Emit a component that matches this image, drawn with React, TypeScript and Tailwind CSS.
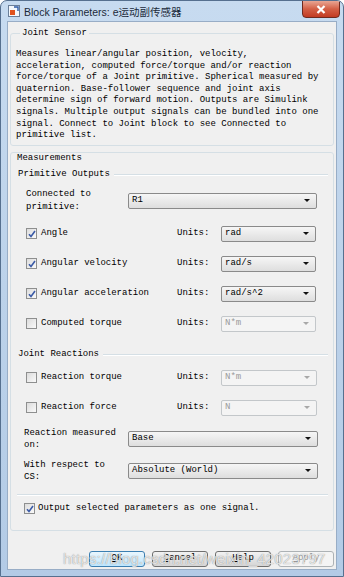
import React from 'react';

const mono = "font-['Liberation_Mono','DejaVu_Sans_Mono',monospace]";

const descLines = [
    'Measures linear/angular position, velocity,',
    'acceleration, computed force/torque and/or reaction',
    'force/torque of a Joint primitive. Spherical measured by',
    'quaternion. Base-follower sequence and joint axis',
    'determine sign of forward motion. Outputs are Simulink',
    'signals. Multiple output signals can be bundled into one',
    'signal. Connect to Joint block to see Connected to',
    'primitive list.',
];

const Combo = ({ value, width, disabled = false }: { value: string; width: string; disabled?: boolean }) => (
    <div
        className={`${width} h-[16px] flex items-center justify-between pl-[3px] pr-[6px] rounded-[2px] border ${
            disabled
                ? 'border-[#c3c7ca] bg-[#f4f4f4] text-[#9a9a9a]'
                : 'border-[#8a8a8a] bg-gradient-to-b from-[#f6f6f6] to-[#dedede] text-black'
        }`}
    >
        <span className="leading-none">{value}</span>
        <svg width="6" height="3" viewBox="0 0 6 3">
            <path d="M0 0 L6 0 L3 3 Z" fill={disabled ? '#a8a8a8' : '#111'} />
        </svg>
    </div>
);

const Check = ({ checked }: { checked: boolean }) => (
    <div className="w-[11px] h-[11px] shrink-0 border border-[#8e8f8f] bg-gradient-to-br from-[#dcdcdc] to-[#fafafa] flex items-center justify-center">
        {checked && (
            <svg width="8" height="8" viewBox="0 0 8 8">
                <path d="M1 4.2 L3 6.5 L7 1" stroke="#3a5aa6" strokeWidth="1.6" fill="none" />
            </svg>
        )}
    </div>
);

const UnitRow = ({
    label,
    unit,
    checked,
    disabled = false,
    comboW = 'w-[95px]',
}: {
    label: string;
    unit: string;
    checked: boolean;
    disabled?: boolean;
    comboW?: string;
}) => (
    <div className="flex items-center h-[20px] pl-[15px]">
        <div className="w-[151px] flex items-center gap-[4px]">
            <Check checked={checked} />
            <span>{label}</span>
        </div>
        <span className="w-[44px]">Units:</span>
        <Combo value={unit} width={comboW} disabled={disabled} />
    </div>
);

const SectionHeader = ({ title }: { title: string }) => (
    <div className="flex items-center h-[12px] pl-[7px] pr-[5px] gap-[4px]">
        <span>{title}</span>
        <div className="flex-1 border-t border-[#d5dfe5] border-b border-b-white" />
    </div>
);

const TwoLineRow = ({ lines, value }: { lines: [string, string]; value: string }) => (
    <div className="flex items-center h-[24px] pl-[13px]">
        <div className="w-[104px] leading-[12px]">
            <div>{lines[0]}</div>
            <div>{lines[1]}</div>
        </div>
        <Combo value={value} width="w-[190px]" />
    </div>
);

const Button = ({ label, focused = false, disabled = false }: { label: string; focused?: boolean; disabled?: boolean }) => (
    <div
        className={`w-[56px] h-[16px] flex items-center justify-center rounded-[3px] border ${
            focused
                ? 'border-[#3c7fb1] bg-gradient-to-b from-[#eaf6fd] to-[#bee6fd] text-black'
                : disabled
                ? 'border-[#adb2b5] bg-[#f4f4f4] text-[#9a9a9a]'
                : 'border-[#707070] bg-gradient-to-b from-[#f2f2f2] to-[#d5d5d5] text-black'
        }`}
    >
        <span className="underline decoration-1 underline-offset-1">{label[0]}</span>
        <span>{label.slice(1)}</span>
    </div>
);

export default function App() {
    return (
        <div className="w-[344px] h-[577px] relative overflow-hidden flex flex-col border border-[#56708f] rounded-t-[7px] bg-gradient-to-b from-[#c7dbf0] via-[#bcd2ea] to-[#b3cbe6]">
            {/* title bar */}
            <div className="h-[20px] flex items-start relative">
                <div className="flex items-center h-[20px] pl-[7px] gap-[4px]">
                    <svg width="12" height="12" viewBox="0 0 12 12">
                        <rect x="0.5" y="0.5" width="11" height="11" fill="#f4f7fb" stroke="#6b7f99" />
                        <rect x="2" y="5" width="5" height="5" fill="#e0531f" />
                        <path d="M6 2 L10 2 L10 6" stroke="#2d5ca8" strokeWidth="1.4" fill="none" />
                    </svg>
                    <span className="text-[10.5px] text-[#1b2a3a] font-['Liberation_Sans','Noto_Sans_CJK_SC',sans-serif] leading-none mt-[2px]">
                        Block Parameters: e运动副传感器
                    </span>
                </div>
                <div className="ml-auto mr-[3px] -mt-px w-[38px] h-[18px] rounded-b-[4px] border border-[#6e2a1f] bg-gradient-to-b from-[#e8a593] via-[#d35f45] to-[#c23a22] flex items-center justify-center">
                    <svg width="10" height="9" viewBox="0 0 10 9">
                        <path d="M1.5 1 L8.5 8 M8.5 1 L1.5 8" stroke="#ffffff" strokeWidth="2.2" />
                    </svg>
                </div>
            </div>

            {/* client area */}
            <div
                className={`flex-1 mx-[6px] mb-[6px] border border-[#98adc6] bg-[#f0f0f0] flex flex-col px-[2px] pt-[5px] pb-[2px] text-[9px] text-black ${mono}`}
            >
                <fieldset className="border border-[#d5dfe5] rounded-[3px] pl-[5px] pt-[10px] pb-[3px]">
                    <legend className="ml-[4px] px-[2px] leading-[12px]">Joint Sensor</legend>
                    <div className="leading-[11.6px] whitespace-pre">
                        {descLines.map((l) => (
                            <div key={l}>{l}</div>
                        ))}
                    </div>
                </fieldset>

                <div className="mt-[6px] border border-[#d5dfe5] rounded-[3px] pb-[14px] flex flex-col">
                    <div className="h-[11px] leading-[11px] pl-[6px]">Measurements</div>

                    <div className="mt-[5px]">
                        <SectionHeader title="Primitive Outputs" />
                    </div>
                    <div className="mt-[7px] flex items-center h-[26px] pl-[15px]">
                        <div className="w-[102px] leading-[13px]">
                            <div>Connected to</div>
                            <div>primitive:</div>
                        </div>
                        <Combo value="R1" width="w-[189px]" />
                    </div>

                    <div className="mt-[10px] flex flex-col gap-[10px]">
                        <UnitRow label="Angle" unit="rad" checked />
                        <UnitRow label="Angular velocity" unit="rad/s" checked />
                        <UnitRow label="Angular acceleration" unit="rad/s^2" checked />
                        <UnitRow label="Computed torque" unit="N*m" checked={false} disabled />
                    </div>

                    <div className="mt-[15px]">
                        <SectionHeader title="Joint Reactions" />
                    </div>
                    <div className="mt-[7px] flex flex-col gap-[10px]">
                        <UnitRow label="Reaction torque" unit="N*m" checked={false} disabled comboW="w-[96px]" />
                        <UnitRow label="Reaction force" unit="N" checked={false} disabled comboW="w-[96px]" />
                    </div>

                    <div className="mt-[9px]">
                        <TwoLineRow lines={['Reaction measured', 'on:']} value="Base" />
                    </div>
                    <div className="mt-[8px]">
                        <TwoLineRow lines={['With respect to', 'CS:']} value="Absolute (World)" />
                    </div>

                    <div className="mt-[11px] mx-[6px] mr-[5px] border-t border-[#d5dfe5] border-b border-b-white" />

                    <div className="mt-[6px] h-[14px] flex items-center gap-[3px] pl-[13px]">
                        <Check checked />
                        <span>Output selected parameters as one signal.</span>
                    </div>
                </div>

                <div className="flex-1" />

                <div className="flex justify-end gap-[7px]">
                    <Button label="OK" focused />
                    <Button label="Cancel" />
                    <Button label="Help" />
                    <Button label="Apply" disabled />
                </div>
            </div>

            {/* watermark */}
            <span className="absolute left-[62px] top-[549px] text-[15px] leading-[18px] tracking-[0.2px] text-white/75 font-['Liberation_Sans',sans-serif] [text-shadow:0_0_1px_rgba(90,90,90,0.8)] pointer-events-none">
                https://blog.csdn.net/weixin_42023797
            </span>
        </div>
    );
}
